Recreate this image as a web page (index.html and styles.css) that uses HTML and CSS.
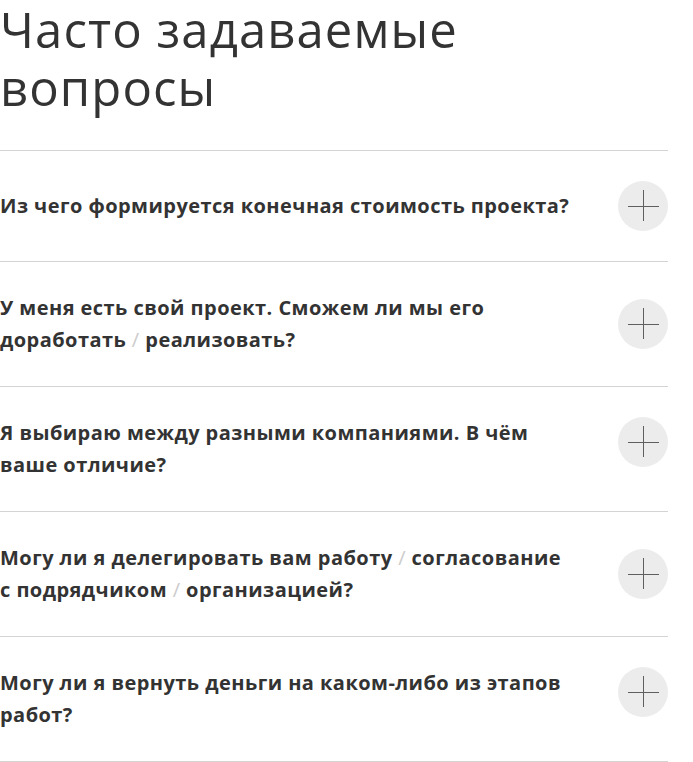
FILE: index.html
```
<!DOCTYPE html>
<html lang="ru">
<head>
<meta charset="utf-8">
<link rel="stylesheet" href="styles.css">
</head>
<body>
<section class="faq">
  <h1 class="faq-title">Часто задаваемые<br>вопросы</h1>
  <ul class="faq-list">
    <li class="faq-item faq-item--center">
      <p class="faq-q">Из чего формируется конечная стоимость проекта?</p>
      <span class="faq-toggle"></span>
    </li>
    <li class="faq-item faq-item--center">
      <p class="faq-q">У меня есть свой проект. Сможем ли мы его<br>доработать <span class="slash">/</span> реализовать?</p>
      <span class="faq-toggle"></span>
    </li>
    <li class="faq-item">
      <p class="faq-q">Я выбираю между разными компаниями. В чём<br>ваше отличие?</p>
      <span class="faq-toggle"></span>
    </li>
    <li class="faq-item faq-item--center">
      <p class="faq-q">Могу ли я делегировать вам работу <span class="slash">/</span> согласование<br>с подрядчиком <span class="slash">/</span> организацией?</p>
      <span class="faq-toggle"></span>
    </li>
    <li class="faq-item">
      <p class="faq-q">Могу ли я вернуть деньги на каком-либо из этапов<br>работ?</p>
      <span class="faq-toggle"></span>
    </li>
  </ul>
</section>
</body>
</html>
```
FILE: styles.css
```
html, body {
  margin: 0;
  padding: 0;
  background: #fff;
}
body {
  font-family: "Open Sans", "Noto Sans", sans-serif;
  color: #333;
}
.faq {
  width: 668px;
}
.faq-title {
  margin: 0;
  padding: 0 0 34px 0;
  font-size: 49px;
  font-weight: 400;
  line-height: 58px;
  color: #333;
  letter-spacing: 1.1px;
}
.faq-list {
  list-style: none;
  margin: 0;
  padding: 0;
  border-top: 1px solid #d4d4d4;
}
.faq-item {
  display: flex;
  justify-content: space-between;
  align-items: flex-start;
  padding: 30px 0;
  border-bottom: 1px solid #d4d4d4;
}
.faq-item--center {
  align-items: center;
}
.faq-q {
  margin: 0;
  font-size: 20px;
  font-weight: 700;
  line-height: 32px;
  letter-spacing: 0.45px;
  color: #333;
}
.slash {
  color: #ccc;
  font-weight: 400;
}
.faq-toggle {
  position: relative;
  flex: none;
  width: 50px;
  height: 50px;
  border-radius: 50%;
  background: #ececec;
}
.faq-toggle::before,
.faq-toggle::after {
  content: "";
  position: absolute;
  background: #5f5f5f;
}
.faq-toggle::before {
  left: 10px;
  top: 25px;
  width: 31px;
  height: 1px;
}
.faq-toggle::after {
  left: 25px;
  top: 9px;
  width: 1px;
  height: 31px;
}
```
